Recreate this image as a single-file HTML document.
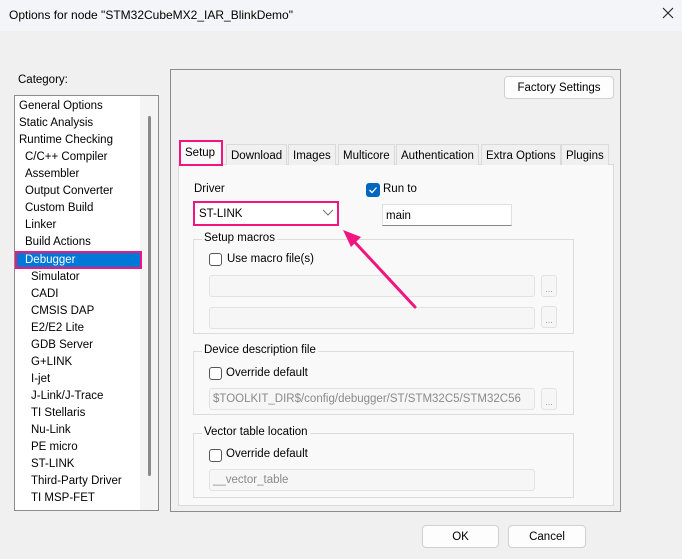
<!DOCTYPE html>
<html><head><style>
*{box-sizing:border-box;margin:0;padding:0}
body{width:682px;height:559px;background:#f0f0f0;font-family:"Liberation Sans",sans-serif;font-size:11.5px;line-height:17px;color:#000;position:relative;overflow:hidden}
.a{position:absolute;white-space:nowrap}
.btn{position:absolute;background:#fdfdfd;border:1px solid #d0d0d0;border-radius:4px;text-align:center}
.grp{position:absolute;border:1px solid #dcdcdc}
.gl{position:absolute;top:-10px;left:8px;background:#f9f9f9;padding:0 2px}
.cb{position:absolute;width:13px;height:13px;border:1px solid #555;border-radius:3px;background:#fff}
.fld{position:absolute;background:#f6f6f6;border:1px solid #e2e2e2;border-radius:3px;color:#8a8a8a;padding:2px 0 0 3px}
.dot{position:absolute;width:16px;height:22px;border:1px solid #e2e2e2;border-radius:3px;background:#f6f6f6;color:#999;font-size:9px;text-align:center;line-height:26px}
.li{position:absolute;left:4px;height:17px;line-height:19px}
.tab{position:absolute;top:144px;height:21px;line-height:22px;border:1px solid #dadada;border-bottom:none;background:#f0f0f0;padding:0 4px}
</style></head><body>
<div class="a" style="left:0;top:0;width:682px;height:31px;background:#f3f5f8"></div>
<div class="a" style="left:9px;top:7px;font-size:12px">Options for node "STM32CubeMX2_IAR_BlinkDemo"</div>
<svg class="a" style="left:662px;top:7px" width="12" height="12"><path d="M1 1 L11 11 M11 1 L1 11" stroke="#222" stroke-width="1.1"/></svg>

<div class="a" style="left:18px;top:72px">Category:</div>
<div class="a" style="left:14px;top:95px;width:145px;height:416px;background:#fff;border:1px solid #8c8c8c">
<div class="a" style="left:125px;top:0;width:18px;height:414px;background:#f4f4f4"></div>
<div class="a" style="left:133px;top:20px;width:3px;height:360px;background:#8a8a8a;border-radius:2px"></div>
<div class="li" style="top:1px">General Options</div>
<div class="li" style="top:18px">Static Analysis</div>
<div class="li" style="top:35px">Runtime Checking</div>
<div class="li" style="top:52px;left:10px">C/C++ Compiler</div>
<div class="li" style="top:69px;left:10px">Assembler</div>
<div class="li" style="top:86px;left:10px">Output Converter</div>
<div class="li" style="top:103px;left:10px">Custom Build</div>
<div class="li" style="top:120px;left:10px">Linker</div>
<div class="li" style="top:137px;left:10px">Build Actions</div>
<div class="a" style="left:0;top:155px;width:127px;height:18px;background:#0078d7;border:2px solid #f0157f"></div>
<div class="li" style="top:155px;left:10px;color:#fff">Debugger</div>
<div class="li" style="top:172px;left:16px">Simulator</div>
<div class="li" style="top:189px;left:16px">CADI</div>
<div class="li" style="top:206px;left:16px">CMSIS DAP</div>
<div class="li" style="top:223px;left:16px">E2/E2 Lite</div>
<div class="li" style="top:240px;left:16px">GDB Server</div>
<div class="li" style="top:257px;left:16px">G+LINK</div>
<div class="li" style="top:274px;left:16px">I-jet</div>
<div class="li" style="top:291px;left:16px">J-Link/J-Trace</div>
<div class="li" style="top:308px;left:16px">TI Stellaris</div>
<div class="li" style="top:325px;left:16px">Nu-Link</div>
<div class="li" style="top:342px;left:16px">PE micro</div>
<div class="li" style="top:359px;left:16px">ST-LINK</div>
<div class="li" style="top:376px;left:16px">Third-Party Driver</div>
<div class="li" style="top:393px;left:16px">TI MSP-FET</div>
</div>

<div class="a" style="left:170px;top:69px;width:451px;height:443px;border:1px solid #8c8c8c;background:#f0f0f0"></div>
<div class="btn" style="left:504px;top:76px;width:110px;height:23px;line-height:22px">Factory Settings</div>

<div class="a" style="left:178px;top:164px;width:436px;height:342px;background:#f9f9f9;border:1px solid #dadada"></div>
<div class="tab" style="left:226px">Download</div>
<div class="tab" style="left:288px">Images</div>
<div class="tab" style="left:338px">Multicore</div>
<div class="tab" style="left:396px">Authentication</div>
<div class="tab" style="left:481px">Extra Options</div>
<div class="tab" style="left:561px">Plugins</div>
<div class="a" style="left:179px;top:140px;width:44px;height:26px;background:#f9f9f9;border:2px solid #f0157f;padding:3px 0 0 4px">Setup</div>

<div class="a" style="left:194px;top:181px">Driver</div>
<div class="a" style="left:193px;top:201px;width:146px;height:25px;background:#fff;border:2px solid #f0157f;padding:3px 0 0 4px">ST-LINK</div>
<svg class="a" style="left:322px;top:209px" width="12" height="8"><path d="M1 1 L6 6 L11 1" stroke="#777" fill="none"/></svg>
<div class="a" style="left:366px;top:183px;width:14px;height:14px;background:#0067c0;border-radius:3px"></div>
<svg class="a" style="left:366px;top:183px" width="14" height="14"><path d="M3.5 7 L6 9.5 L10.5 4.5" stroke="#fff" stroke-width="1.3" fill="none"/></svg>
<div class="a" style="left:383px;top:181px">Run to</div>
<div class="a" style="left:382px;top:204px;width:130px;height:22px;background:#fff;border:1px solid #e0e0e0;border-bottom-color:#888;padding:3px 0 0 3px">main</div>

<div class="grp" style="left:193px;top:239px;width:381px;height:95px"><div class="gl">Setup macros</div></div>
<div class="cb" style="left:209px;top:253px"></div>
<div class="a" style="left:227px;top:251px">Use macro file(s)</div>
<div class="fld" style="left:209px;top:275px;width:326px;height:22px"></div>
<div class="dot" style="left:541px;top:275px">...</div>
<div class="fld" style="left:209px;top:307px;width:326px;height:22px"></div>
<div class="dot" style="left:541px;top:306px">...</div>

<div class="grp" style="left:193px;top:351px;width:381px;height:64px"><div class="gl">Device description file</div></div>
<div class="cb" style="left:209px;top:367px"></div>
<div class="a" style="left:226px;top:365px">Override default</div>
<div class="fld" style="left:209px;top:388px;width:326px;height:22px;overflow:hidden">$TOOLKIT_DIR$/config/debugger/ST/STM32C5/STM32C56</div>
<div class="dot" style="left:541px;top:388px">...</div>

<div class="grp" style="left:193px;top:433px;width:381px;height:65px"><div class="gl">Vector table location</div></div>
<div class="cb" style="left:209px;top:449px"></div>
<div class="a" style="left:226px;top:446px">Override default</div>
<div class="fld" style="left:209px;top:469px;width:326px;height:22px">__vector_table</div>

<div class="btn" style="left:422px;top:525px;width:77px;height:23px;line-height:22px">OK</div>
<div class="btn" style="left:508px;top:525px;width:78px;height:23px;line-height:22px">Cancel</div>

<svg class="a" style="left:0;top:0" width="682" height="559"><path d="M415 307 L350 237" stroke="#f0157f" stroke-width="3" stroke-linecap="round"/><path d="M343 230 L361 237 L351 247 Z" fill="#f0157f"/></svg>
</body></html>
